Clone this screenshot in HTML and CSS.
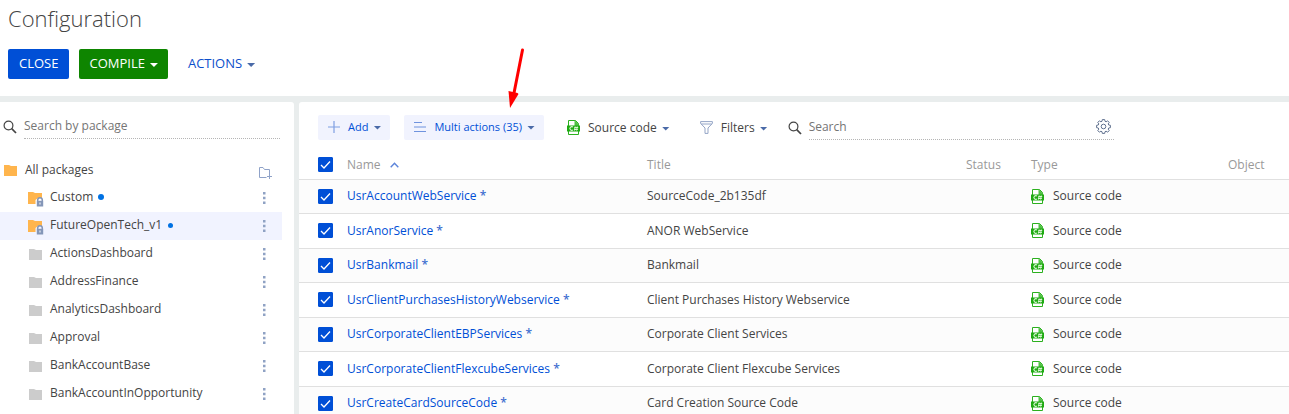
FILE: index.html
```html
<!DOCTYPE html>
<html lang="en">
<head>
    <meta charset="UTF-8">
    <meta name="viewport" content="width=device-width, initial-scale=1.0">
    <title>Configuration</title>
    <link rel="stylesheet" href="styles.css">
</head>
<body>
    <!-- Icons -->
    <svg class="sprite" aria-hidden="true">
        <symbol id="search" viewBox="0 0 14 14">
            <circle cx="5.5" cy="5.5" r="4.4" fill="none" stroke="#444" stroke-width="1.2"/>
            <path d="M8.7 8.7L13 13" stroke="#444" stroke-width="1.7"/>
        </symbol>
        <symbol id="folder" viewBox="0 0 14 12">
            <path d="M0 1h5l2 1h6v10H0z" fill="currentColor"/>
        </symbol>
        <symbol id="locked" viewBox="0 0 16 16">
            <path d="M0 1h5l2 1h7v5h-4L7.500 9v4H0z" fill="#ffb54d"/>
            <path d="M9.700 10V9a2.300 2.300 0 0 1 4.600 0v1" fill="none" stroke="#8496b8" stroke-width="1.5"/>
            <path d="M8.800 9.800h6.400V15.500H8.800z" fill="#8496b8"/>
            <path d="M11.500 11.500h1v2h-1z" fill="#fff"/>
        </symbol>
        <symbol id="new-folder" viewBox="0 0 13 12">
            <path d="M7.500 10.500H.5V.5h3.500l1.500 2h5V7M10.500 7v5M8 9.500h5" fill="none" stroke="#8fa2c8"/>
        </symbol>
        <symbol id="dots" viewBox="0 0 3 12">
            <path d="M0 0h2.500v2.500H0zM0 4.700h2.500v2.500H0zM0 9.500h2.500V12H0z" fill="#8fa2c4"/>
        </symbol>
        <symbol id="csharp" viewBox="0 0 13 15">
            <path d="M1.500 6V.5h7l3 3V6M1.500 11v3.500h10V11" fill="#fff" stroke="#2bb01e"/>
            <path d="M7.500 0L12 4.500V6H7.500z" fill="#4fc043"/>
            <path d="M0 5.500h13V11.500H0z" fill="#1faa12"/>
            <path d="M6 7a2 1.800 0 1 0 0 3M8.200 6.500l-.7 4M10.300 6.500l-.7 4M7.200 7.500h4M6.900 9.500h4" fill="none" stroke="#d9f5d3" stroke-width="1.1"/>
        </symbol>
    </svg>

    <header class="header">
        <h1>Configuration</h1>
        <div class="actions">
            <button class="btn btn-blue">CLOSE</button>
            <button class="btn btn-green">COMPILE <span class="caret"></span></button>
            <button class="btn btn-flat">ACTIONS <span class="caret"></span></button>
        </div>
    </header>

    <main class="content">
        <aside class="packages">
            <div class="search">
                <svg class="icon-search"><use href="#search"/></svg>
                <input type="text" placeholder="Search by package" aria-label="Search by package">
            </div>
            <ul class="tree">
                <li class="root">
                    <svg class="folder orange"><use href="#folder"/></svg>
                    <span>All packages</span>
                    <button class="more" aria-label="Add package"><svg class="new-folder"><use href="#new-folder"/></svg></button>
                </li>
                <li>
                    <svg class="locked"><use href="#locked"/></svg>
                    <span>Custom</span><i class="dot"></i>
                    <button class="more" aria-label="Custom menu"><svg class="dots"><use href="#dots"/></svg></button>
                </li>
                <li class="selected">
                    <svg class="locked"><use href="#locked"/></svg>
                    <span>FutureOpenTech_v1</span><i class="dot small"></i>
                    <button class="more" aria-label="FutureOpenTech_v1 menu"><svg class="dots"><use href="#dots"/></svg></button>
                </li>
                <li>
                    <svg class="folder"><use href="#folder"/></svg>
                    <span>ActionsDashboard</span>
                    <button class="more" aria-label="ActionsDashboard menu"><svg class="dots"><use href="#dots"/></svg></button>
                </li>
                <li>
                    <svg class="folder"><use href="#folder"/></svg>
                    <span>AddressFinance</span>
                    <button class="more" aria-label="AddressFinance menu"><svg class="dots"><use href="#dots"/></svg></button>
                </li>
                <li>
                    <svg class="folder"><use href="#folder"/></svg>
                    <span>AnalyticsDashboard</span>
                    <button class="more" aria-label="AnalyticsDashboard menu"><svg class="dots"><use href="#dots"/></svg></button>
                </li>
                <li>
                    <svg class="folder"><use href="#folder"/></svg>
                    <span>Approval</span>
                    <button class="more" aria-label="Approval menu"><svg class="dots"><use href="#dots"/></svg></button>
                </li>
                <li>
                    <svg class="folder"><use href="#folder"/></svg>
                    <span>BankAccountBase</span>
                    <button class="more" aria-label="BankAccountBase menu"><svg class="dots"><use href="#dots"/></svg></button>
                </li>
                <li>
                    <svg class="folder"><use href="#folder"/></svg>
                    <span>BankAccountInOpportunity</span>
                    <button class="more" aria-label="BankAccountInOpportunity menu"><svg class="dots"><use href="#dots"/></svg></button>
                </li>
            </ul>
        </aside>

        <section class="schemas">
            <div class="toolbar">
                <button class="tool tool-blue">
                    <svg width="12" height="12" viewBox="0 0 12 12"><path d="M6 0v12M0 6h12" stroke="#7f9fe2" stroke-width="1.200"/></svg>
                    Add <span class="caret"></span>
                </button>
                <div class="multi">
                    <button class="tool tool-blue">
                        <svg width="12" height="10" viewBox="0 0 12 10"><path d="M0 .5h8M0 5h12M0 9.500h12" stroke="#6f93de"/></svg>
                        Multi actions (35) <span class="caret"></span>
                    </button>
                    <svg class="arrow" viewBox="0 0 20 64"><path d="M17.500 4L9 47" stroke="#f00" stroke-width="3" stroke-linecap="round"/><path d="M3.500 45l9 2 1 1L5 62z" fill="#f00"/></svg>
                </div>
                <button class="tool tool-source">
                    <svg class="csharp"><use href="#csharp"/></svg>
                    Source code <span class="caret"></span>
                </button>
                <button class="tool tool-filter">
                    <svg width="13" height="13" viewBox="0 0 13 13"><path d="M.6.6h11.800v1.800L8 7v5.400H5V7L.6 2.400zM1 3h11" fill="none" stroke="#94a5c6"/></svg>
                    Filters <span class="caret"></span>
                </button>
                <div class="search">
                    <svg class="icon-search"><use href="#search"/></svg>
                    <input type="text" placeholder="Search" aria-label="Search">
                    <button class="gear" aria-label="Search settings">
                        <svg width="15" height="15" viewBox="0 0 15 15" fill="none" stroke="#60718f"><path d="M6.300.6h2.400l.3 1.700 1.100.5 1.500-1 1.600 1.600-1 1.500.5 1.100 1.700.3v2.400l-1.700.3-.5 1.100 1 1.500-1.600 1.600-1.500-1-1.100.5-.3 1.700H6.300L6 12.700l-1.100-.5-1.500 1-1.600-1.600 1-1.500L2.300 9 .6 8.700V6.300L2.300 6l.5-1.100-1-1.500 1.600-1.600 1.500 1L6 2.300z"/><circle cx="7.500" cy="7.500" r="2.300"/></svg>
                    </button>
                </div>
            </div>

            <table class="grid">
                <thead>
                    <tr>
                        <th class="col-check"><input type="checkbox" aria-label="Select all" checked></th>
                        <th class="col-name">Name <svg class="sort" width="9" height="6" viewBox="0 0 9 6"><path d="M.7 5.200l3.800-4 3.800 4" fill="none" stroke="#5c84da" stroke-width="1.400"/></svg></th>
                        <th class="col-title">Title</th>
                        <th class="col-status">Status</th>
                        <th class="col-type">Type</th>
                        <th>Object</th>
                    </tr>
                </thead>
                <tbody>
                    <tr>
                        <td class="col-check"><input type="checkbox" aria-label="UsrAccountWebService" checked></td>
                        <td><a href="#">UsrAccountWebService <b>*</b></a></td>
                        <td>SourceCode_2b135df</td>
                        <td></td>
                        <td><span class="type"><svg class="csharp"><use href="#csharp"/></svg>Source code</span></td>
                        <td></td>
                    </tr>
                    <tr>
                        <td class="col-check"><input type="checkbox" aria-label="UsrAnorService" checked></td>
                        <td><a href="#">UsrAnorService <b>*</b></a></td>
                        <td>ANOR WebService</td>
                        <td></td>
                        <td><span class="type"><svg class="csharp"><use href="#csharp"/></svg>Source code</span></td>
                        <td></td>
                    </tr>
                    <tr>
                        <td class="col-check"><input type="checkbox" aria-label="UsrBankmail" checked></td>
                        <td><a href="#">UsrBankmail <b>*</b></a></td>
                        <td>Bankmail</td>
                        <td></td>
                        <td><span class="type"><svg class="csharp"><use href="#csharp"/></svg>Source code</span></td>
                        <td></td>
                    </tr>
                    <tr>
                        <td class="col-check"><input type="checkbox" aria-label="UsrClientPurchasesHistoryWebservice" checked></td>
                        <td><a href="#">UsrClientPurchasesHistoryWebservice <b>*</b></a></td>
                        <td>Client Purchases History Webservice</td>
                        <td></td>
                        <td><span class="type"><svg class="csharp"><use href="#csharp"/></svg>Source code</span></td>
                        <td></td>
                    </tr>
                    <tr>
                        <td class="col-check"><input type="checkbox" aria-label="UsrCorporateClientEBPServices" checked></td>
                        <td><a href="#">UsrCorporateClientEBPServices <b>*</b></a></td>
                        <td>Corporate Client Services</td>
                        <td></td>
                        <td><span class="type"><svg class="csharp"><use href="#csharp"/></svg>Source code</span></td>
                        <td></td>
                    </tr>
                    <tr>
                        <td class="col-check"><input type="checkbox" aria-label="UsrCorporateClientFlexcubeServices" checked></td>
                        <td><a href="#">UsrCorporateClientFlexcubeServices <b>*</b></a></td>
                        <td>Corporate Client Flexcube Services</td>
                        <td></td>
                        <td><span class="type"><svg class="csharp"><use href="#csharp"/></svg>Source code</span></td>
                        <td></td>
                    </tr>
                    <tr>
                        <td class="col-check"><input type="checkbox" aria-label="UsrCreateCardSourceCode" checked></td>
                        <td><a href="#">UsrCreateCardSourceCode <b>*</b></a></td>
                        <td>Card Creation Source Code</td>
                        <td></td>
                        <td><span class="type"><svg class="csharp"><use href="#csharp"/></svg>Source code</span></td>
                        <td></td>
                    </tr>
                </tbody>
            </table>
        </section>
    </main>
</body>
</html>
```
FILE: styles.css
```css
* {
    box-sizing: border-box;
}

body {
    display: flex;
    flex-direction: column;
    height: 100vh;
    margin: 0;
    overflow: hidden;
    background-color: #fff;
    color: #444;
    font-family: "Open Sans", sans-serif;
    font-size: 12px;
    line-height: 18px;
}

button,
input {
    font: inherit;
    margin: 0;
}

button {
    border: none;
    padding: 0;
    background: none;
    cursor: pointer;
}

svg {
    flex: none;
}

.sprite {
    position: absolute;
    width: 0;
    height: 0;
}

/* Header */
.header {
    flex: none;
    padding: 2px 8px 17px;
}

h1 {
    margin: 0 0 15px;
    font-size: 22px;
    font-weight: 300;
    line-height: 32px;
}

.actions {
    display: flex;
}

.btn {
    display: flex;
    align-items: center;
    gap: 5px;
    height: 30px;
    padding-bottom: 2px;
    border-radius: 2px;
    font-size: 13px;
    color: #fff;
}

.btn-blue {
    padding: 0 11px 2px;
    margin-right: 10px;
    background-color: #004fd6;
}

.btn-green {
    padding: 0 10px 2px;
    margin-right: 20px;
    background-color: #0e8500;
}

.btn-flat {
    color: #0d4fcb;
}

.caret {
    width: 8px;
    height: 4px;
    margin-top: 4px;
    background-color: #4a6aa8;
    clip-path: polygon(0 0, 100% 0, 50% 100%);
}

.btn-green .caret {
    background-color: #fff;
}

/* Panels */
.content {
    flex: 1;
    display: flex;
    gap: 5px;
    min-height: 0;
    padding-top: 6px;
    background-color: #e9eded;
}

.packages,
.schemas {
    background-color: #fff;
}

.packages {
    flex: none;
    width: 294px;
    padding: 13px 12px 0 0;
    border-radius: 0 3px 0 0;
}

.schemas {
    flex: 1;
    border-radius: 3px 0 0 0;
}

.search {
    display: flex;
    align-items: center;
    gap: 7px;
    position: relative;
}

.icon-search {
    width: 14px;
    height: 14px;
}

.search input {
    flex: 1;
    min-width: 0;
    height: 24px;
    padding: 0 0 2px;
    border: none;
    border-bottom: 1px dotted #b5b5b5;
    outline: none;
    background: none;
    color: #444;
}

.search input::placeholder {
    color: #757575;
    opacity: 1;
}

.packages .search {
    padding: 0 2px 0 3px;
}

/* Package tree */
.tree {
    margin: 17px 0 0;
    padding: 0;
    list-style: none;
}

.tree li {
    display: flex;
    align-items: center;
    height: 28px;
    padding: 0 16px 2px 28px;
}

.tree .root {
    padding: 0 10px 0 4px;
}

.tree .selected {
    background-color: #f1f3ff;
}

.tree span {
    margin-left: 6px;
}

.folder {
    width: 14px;
    height: 12px;
    margin: 2px 1px 0;
    color: #ccc;
}

.root .folder {
    margin: 0 1px 0 0;
}

.root .orange {
    color: #ffb54d;
}

.locked {
    width: 16px;
    height: 16px;
    margin-top: 4px;
}

.root .new-folder {
    width: 13px;
    height: 12px;
    margin-top: 6px;
}

.dot {
    width: 6px;
    height: 6px;
    margin-left: 5px;
    border-radius: 50%;
    background-color: #0071e3;
}

.small {
    width: 5px;
    height: 5px;
    margin-left: 6px;
}

.more {
    display: flex;
    margin-left: auto;
}

.dots {
    width: 3px;
    height: 12px;
    margin-top: 2px;
}

/* Toolbar */
.toolbar {
    display: flex;
    padding: 13px 175px 0 19px;
}

.tool {
    display: flex;
    align-items: center;
    gap: 5px;
    height: 25px;
    color: #444;
    white-space: nowrap;
}

.tool svg {
    margin-right: 3px;
}

.tool .caret {
    margin-top: 2px;
}

.tool-blue {
    padding: 0 9px 2px 10px;
    border-radius: 2px;
    background-color: #f1f3fe;
    color: #004fd6;
    font-size: 11px;
}

.multi {
    position: relative;
    margin: 0 23px 0 14px;
}

.arrow {
    position: absolute;
    left: 101px;
    top: -69px;
    width: 20px;
    height: 64px;
    pointer-events: none;
}

.tool-filter {
    margin: 0 20px 0 30px;
}

.toolbar .search {
    flex: 1;
}

.gear {
    position: absolute;
    right: 3px;
    top: 4px;
    display: flex;
}

.csharp {
    width: 13px;
    height: 15px;
}

/* Schema list */
.grid {
    width: 100%;
    margin-top: 11px;
    border-collapse: collapse;
    table-layout: fixed;
}

.grid th,
.grid td {
    height: 34px;
    padding: 0;
    border-bottom: 1px solid #e0e0e0;
    text-align: left;
    font-weight: 400;
    white-space: nowrap;
}

.grid th {
    height: 28px;
    color: #999;
}

.grid tbody tr:nth-child(even) td {
    height: 35px;
}

.grid tbody tr:nth-child(odd) {
    background-color: #fcfcfc;
}

.grid .col-check {
    width: 48px;
    padding-left: 19px;
}

.col-name {
    width: 300px;
}

.col-title {
    width: 319px;
}

.col-status {
    width: 65px;
}

.col-type {
    width: 197px;
}

.sort {
    margin: 0 0 1px 6px;
}

.grid input {
    display: block;
    appearance: none;
    width: 15px;
    height: 15px;
    border-radius: 1px;
    border: 1px solid #004fd6;
}

.grid input:checked {
    background: #004fd6 url("data:image/svg+xml,%3Csvg xmlns='http://www.w3.org/2000/svg' viewBox='0 0 13 13'%3E%3Cpath d='M2 7l3 3 6-6.500' fill='none' stroke='white' stroke-width='1.300'/%3E%3C/svg%3E") center / 13px no-repeat;
}

.grid a {
    color: #004fd6;
    text-decoration: none;
}

.grid b {
    color: #3f6fd0;
    font-weight: 600;
}

.type {
    display: flex;
    align-items: center;
    gap: 9px;
}
```
